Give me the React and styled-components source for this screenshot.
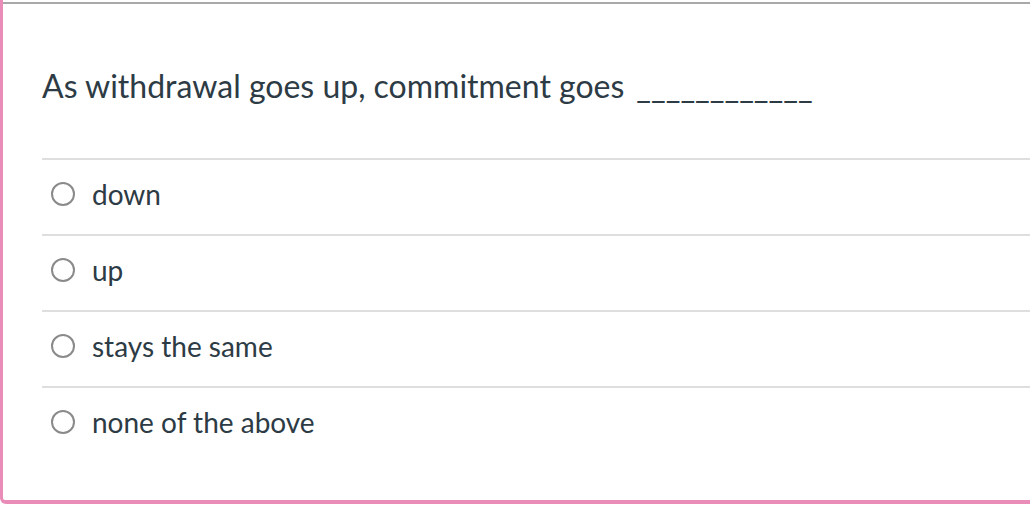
import React from "react";
import styled, { createGlobalStyle } from "styled-components";

const Global = createGlobalStyle`
  html, body { margin: 0; padding: 0; background: #fff; }
  body { font-family: Lato, "Open Sans", sans-serif; color: #2d3b45; }
`;

const Card = styled.div`
  box-sizing: border-box;
  height: 504px;
  border-left: 3px solid #e98cb7;
  border-bottom: 4px solid #e98cb7;
  border-bottom-left-radius: 6px;
  background: #fff;
  overflow: hidden;
`;

const TopRule = styled.div`
  margin-top: 2px;
  height: 2px;
  background: #a9a9a9;
`;

const Body = styled.div`
  padding-left: 39px;
`;

const Question = styled.p`
  margin: 0;
  height: 154px;
  box-sizing: border-box;
  padding-top: 62px;
  font-size: 32px;
  line-height: 40px;
  color: #2d3b45;
  white-space: nowrap;
`;

const Blank = styled.span`
  margin-left: 12px;
`;

const List = styled.div`
  display: flex;
  flex-direction: column;
`;

const Option = styled.label`
  display: flex;
  align-items: center;
  gap: 18px;
  border-top: 2px solid #dedede;
  padding-left: 10px;
  padding-bottom: 7px;
  height: 67px;
  font-size: 28px;
  color: #2d3b45;
  white-space: nowrap;
`;

const Radio = styled.span`
  box-sizing: border-box;
  width: 24px;
  height: 24px;
  margin-left: -1px;
  margin-right: -1px;
  border-radius: 50%;
  border: 2px solid #8a8a8a;
  flex: none;
`;

const options = ["down", "up", "stays the same", "none of the above"];

export default function App() {
  return (
    <>
      <Global />
      <Card>
        <TopRule />
        <Body>
          <Question>
            As withdrawal goes up, commitment goes<Blank>____________</Blank>
          </Question>
          <List>
            {options.map((o) => (
              <Option key={o}>
                <Radio />
                {o}
              </Option>
            ))}
          </List>
        </Body>
      </Card>
    </>
  );
}
